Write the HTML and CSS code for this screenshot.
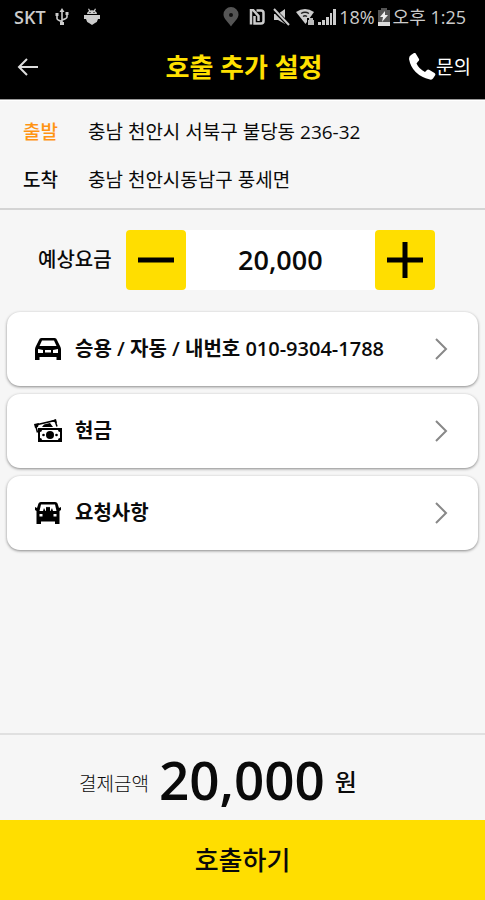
FILE: index.html
```html
<!DOCTYPE html>
<html lang="ko">
<head>
<meta charset="utf-8">
<meta name="viewport" content="width=device-width, initial-scale=1">
<title>호출 추가 설정</title>
<link rel="stylesheet" href="styles.css">
</head>
<body>
<div class="status">
  <div class="status-side">
    <span class="carrier">SKT</span>
    <svg class="usb" width="14" height="18" viewBox="0 0 14 18" fill="none" stroke="currentColor" stroke-width="1.6"><path d="M7 2v14M2 7v3.500q0 1.500 5 3M12 6v3q0 1.500-5 3"/><path d="M7 0l2.500 4h-5zM.5 5h3v3h-3zM10.500 4h3v3h-3zM5 14h4v3H5z" fill="currentColor" stroke="none"/></svg>
    <svg class="droid" width="18" height="18" viewBox="0 0 18 18" fill="currentColor"><path d="M4 6q0-2 2-3L5 1l1-.5 1.200 2q1.800-.5 3.600 0l1.200-2 1 .5-1 2q2 1 2 3zM1 7h16v4h-2q-.5 3-3 4l-3 2-3-2q-2.500-1-3-4H1z"/><path d="M6.500 4h1v1h-1zM10.500 4h1v1h-1z" fill="#000"/></svg>
  </div>
  <div class="status-side right">
    <svg class="pin" width="16" height="20" viewBox="0 0 16 20"><path d="M8 0a7.500 7.500 0 0 0-7.500 7.500C.5 12 5 14.500 8 19.500c3-5 7.500-7.500 7.500-12A7.500 7.500 0 0 0 8 0z" fill="#555"/><circle cx="8" cy="8" r="2" fill="#111"/></svg>
    <svg class="nfc" width="16" height="16" viewBox="0 0 16 16" fill="none" stroke="#ccc"><path d="M2 15.500V1l2 0 5.500 6v5" stroke-width="2.500"/><path d="M7.500 1.500H12q2.500 0 2.500 2.500v8q0 2.500-2.500 2.500H5.500V7" stroke-width="2.500"/></svg>
    <svg class="mute" width="17" height="18" viewBox="0 0 17 18"><path d="M1 6h4l7-5v15L5 12H1z" fill="#ccc"/><path d="M0 1l15 15" stroke="#000" stroke-width="4"/><path d="M1 1l15 16" stroke="#ccc" stroke-width="2"/></svg>
    <svg class="wifi" width="19" height="18" viewBox="0 0 19 18"><path d="M0 4q9-6 18 0L9.500 16z" fill="#ccc"/><path d="M5 5.500q4-2.500 8 0M7 8.500q2-1.500 4 0" stroke="#222" stroke-width="1.300" fill="none"/><path d="M11 10h8v8h-8z" fill="#000"/><path d="M12 12h6v5h-6zM13 12v-2h4v2" fill="#bbb"/></svg>
    <svg class="signal" width="18" height="18" viewBox="0 0 18 18" fill="#ccc"><path d="M0 14h3v3H0zM4 12h3v5H4zM8 9h3v8H8zM12 5h2v12h-2zM15 1h3v16h-3z"/></svg>
    <span>18%</span>
    <svg class="battery" width="12" height="18" viewBox="0 0 12 18"><path d="M3 0h6v2h3v16H0V2h3z" fill="#555"/><path d="M0 14h12v4H0z" fill="#ddd"/><path d="M7 3L2 9h3l-1 5 6-7H7z" fill="#eee"/></svg>
    <span>오후 1:25</span>
  </div>
</div>
<header class="bar">
  <button class="back" type="button" aria-label="뒤로"><svg width="22" height="20" viewBox="0 0 22 20" fill="none" stroke="#ddd" stroke-width="2"><path d="M21 10H3M10 2l-8 8 8 8"/></svg></button>
  <h1>호출 추가 설정</h1>
  <a class="ask" href="#ask"><svg width="27" height="27" viewBox="0 0 27 27"><path d="M2 2L5 0q1.500-.5 2 1l3 5q.5 1.500-1 2.500L7.500 10.500Q10 16 16 19l2-2q1-1 2.500 0l5 3q1.500 1 .5 2.500l-2 3Q23 27 21 26.500 3 22 0 6 0 3 2 2z" fill="#fff"/></svg>문의</a>
</header>
<main>
  <dl class="route">
    <dt class="from">출발</dt><dd>충남 천안시 서북구 불당동 236-32</dd>
    <dt>도착</dt><dd>충남 천안시동남구 풍세면</dd>
  </dl>
  <div class="fare">
    <label for="fare">예상요금</label>
    <div class="stepper">
      <button type="button" aria-label="감소"><svg width="36" height="36" viewBox="0 0 36 36" stroke="#000" stroke-width="5"><path d="M0 18h36"/></svg></button>
      <input id="fare" type="text" inputmode="numeric" value="20,000">
      <button type="button" aria-label="증가"><svg width="36" height="36" viewBox="0 0 36 36" stroke="#000" stroke-width="5"><path d="M0 18h36M18 0v36"/></svg></button>
    </div>
  </div>
  <div class="options">
    <button class="card" type="button">
      <svg class="icon" width="26" height="22" viewBox="0 0 26 22"><path d="M4 2Q4.500 0 6.500 0h13q2 0 2.500 2l3.500 7 .5 2v11h-4.500v-3h-17v3H0V11l.5-2z"/><path d="M7 2.500h12L21.500 8h-17zM3 11l5 1v3H3zM23 11l-5 1v3h5zM10 12h6v2.500h-6z" fill="#fff"/></svg>
      <span>승용 / 자동 / 내번호 010-9304-1788</span>
      <svg class="chev" width="14" height="22" viewBox="0 0 14 22"><path d="M2 1l10 10L2 21"/></svg>
    </button>
    <button class="card" type="button">
      <svg class="icon" width="28" height="24" viewBox="0 0 28 24"><path d="M1.500 6L21 1.500l2 6M1.500 6l2 7.500" fill="none" stroke="#000" stroke-width="1.500"/><path d="M0 5l5-1-1 4-3 1zM17 2l5-2 1 4zM8 8l2-2.500 6-1.500 3 4z"/><path d="M4 9h24v14H4z"/><path d="M8 11h16q0 2 2 2v6q-2 0-2 2H8q0-2-2-2v-6q2 0 2-2z" fill="#fff"/><circle cx="16" cy="16" r="4"/><circle cx="9.500" cy="16" r="1.300"/><circle cx="22.500" cy="16" r="1.300"/></svg>
      <span>현금</span>
      <svg class="chev" width="14" height="22" viewBox="0 0 14 22"><path d="M2 1l10 10L2 21"/></svg>
    </button>
    <button class="card" type="button">
      <svg class="icon" width="26" height="22" viewBox="0 0 26 22"><path d="M3 3Q3.500 0 6 0h14q2.500 0 3 3l1 3 2-1v3l-1.500 1v13H20v-2.500H6V22H1.500V9L0 8V5l2 1z"/><path d="M6 2.500h14L21.500 9H18l-1-3-1.500 3h-5L9 6 8 9H4.500zM4.500 12h3v2.500h-3zM18.500 12h3v2.500h-3z" fill="#fff"/><path d="M11 9V5.500q1-1.500 2 0Q14 4 15 5.500V9z"/></svg>
      <span>요청사항</span>
      <svg class="chev" width="14" height="22" viewBox="0 0 14 22"><path d="M2 1l10 10L2 21"/></svg>
    </button>
  </div>
</main>
<footer>
  <p class="total"><span>결제금액</span><strong>20,000</strong><b>원</b></p>
  <button class="call" type="button">호출하기</button>
</footer>
</body>
</html>
```

FILE: styles.css
```css
* { box-sizing: border-box; }
body {
  margin: 0;
  min-height: 100vh;
  display: flex;
  flex-direction: column;
  background: #f6f6f6;
  color: #0a0a0a;
  font: 400 20px/28px "Open Sans", "Noto Sans CJK KR", sans-serif;
}
button, input { font: inherit; color: inherit; border: 0; margin: 0; padding: 0; background: none; }
button { cursor: pointer; }
svg { display: block; flex: none; }

.status {
  display: flex;
  justify-content: space-between;
  align-items: center;
  height: 34px;
  padding: 0 19px 0 14px;
  background: #000;
  color: #ccc;
  font-size: 18px;
  line-height: 34px;
}
.status-side { display: flex; align-items: center; white-space: nowrap; }
.carrier { font-size: 18px; font-weight: 600; }
.usb { margin-left: 9px; }
.droid { margin-left: 14px; }
.right { gap: 3px; }
.nfc { margin-left: 7px; }
.mute { margin-left: 5px; }
.wifi { margin-left: 3px; }

.bar {
  display: grid;
  grid-template-columns: 1fr auto 1fr;
  align-items: center;
  height: 66px;
  padding: 0 14px 0 17px;
  background: #000;
  border-bottom: 1px solid #999;
}
.back { justify-self: start; }
h1 { margin: 0; color: #ffe000; font-size: 26px; font-weight: 700; line-height: 32px; }
.ask { justify-self: end; display: flex; align-items: center; color: #fff; text-decoration: none; font-size: 19px; }

main { flex: 1; }
.route {
  display: grid;
  grid-template-columns: 65px 1fr;
  row-gap: 20px;
  margin: 0;
  padding: 17px 23px 14px;
  border-top: 1px solid #fff;
  border-bottom: 2px solid #d4d4d4;
  font-size: 19px;
}
.route dt { font-weight: 500; }
.route dd { margin: 0; }
.route .from { color: #ff9412; }

.fare { display: flex; align-items: center; gap: 14px; padding: 20px 50px 20px 38px; }
.fare label { font-weight: 500; white-space: nowrap; }
.stepper { flex: 1; min-width: 0; display: flex; height: 60px; background: #fff; border-radius: 4px; }
.stepper button { flex: none; width: 60px; display: grid; place-items: center; background: #ffde00; border-radius: 4px; }
.stepper input { flex: 1; min-width: 0; text-align: center; font-size: 27px; font-weight: 600; }

.options { display: flex; flex-direction: column; gap: 8px; padding: 2px 7px; }
.card {
  display: flex;
  align-items: center;
  height: 74px;
  padding: 0 30px 0 27px;
  background: #fff;
  border-radius: 13px;
  box-shadow: 0 1px 3px rgba(0, 0, 0, 0.45);
  text-align: left;
  font-weight: 600;
}
.card .icon { width: 28px; }
.card span { flex: 1; margin-left: 13px; }
.chev { fill: none; stroke: #888; stroke-width: 2; }

.total {
  display: flex;
  align-items: center;
  gap: 10px;
  height: 87px;
  margin: 0;
  padding: 4px 79px 0;
  border-top: 2px solid #e0e0e0;
  white-space: nowrap;
}
.total span { padding-top: 8px; font-size: 19px; font-weight: 300; }
.total strong { font-size: 53px; font-weight: 600; line-height: 60px; }
.total b { padding-top: 4px; font-size: 24px; font-weight: 500; }
.call { width: 100%; height: 80px; display: block; background: #ffde00; font-size: 26px; font-weight: 500; }
```
